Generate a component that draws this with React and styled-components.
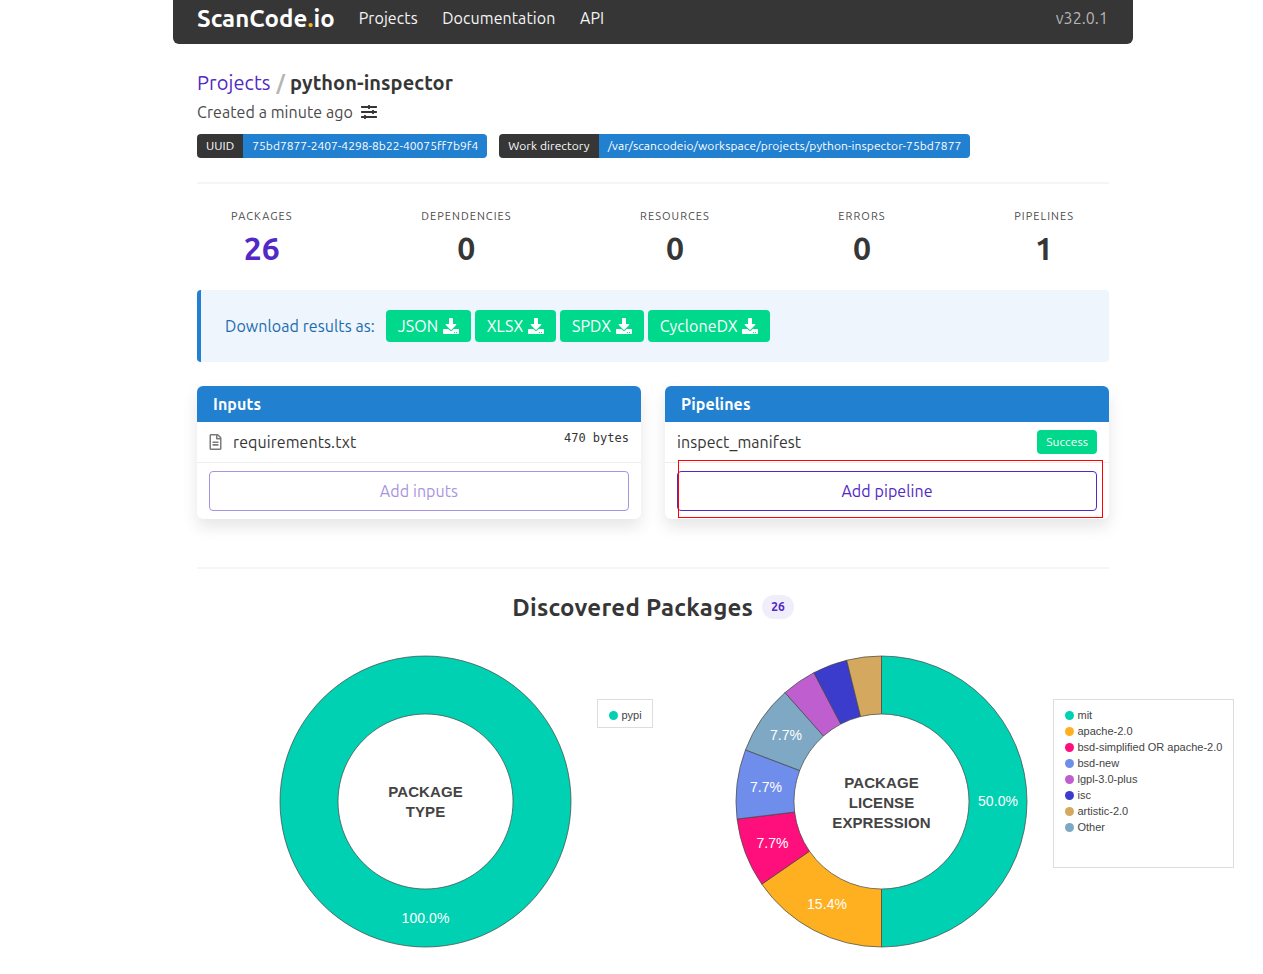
import React from "react"
import styled, { createGlobalStyle } from "styled-components"
import { FaDownload, FaRegFileAlt, FaSlidersH } from "react-icons/fa"

const GlobalStyle = createGlobalStyle`
  * { box-sizing: border-box; }
  body {
    margin: 0;
    background: #fff;
    color: #4a4a4a;
    font-family: "Ubuntu", "Noto Sans", "Liberation Sans", sans-serif;
    font-size: 16px;
    letter-spacing: 0.08px;
  }
`

const Page = styled.div`
  width: 960px;
  margin-left: 173px;
`

const Navbar = styled.nav`
  display: flex;
  align-items: center;
  height: 44px;
  padding: 0 25px 8px 24px;
  background: #363636;
  border-radius: 0 0 6px 6px;
  color: #f5f5f5;
`

const Brand = styled.div`
  font-size: 24px;
  font-weight: 700;
  color: #fff;
  margin-right: 24px;
  span { color: #ffb020; }
`

const NavLink = styled.a`
  margin-right: 24.5px;
  font-size: 16px;
`

const Version = styled.div`
  margin-left: auto;
  color: #b5b5b5;
  font-size: 16px;
`

const Content = styled.main`
  padding: 0 24px;
`

const Title = styled.h1`
  margin: 25px 0 0;
  height: 27px;
  line-height: 27px;
  font-size: 20px;
  font-weight: 400;
  a { color: #5229c4; }
  i { color: #b5b5b5; font-style: normal; font-weight: 700; margin: 0 5px 0 6px; }
  b { color: #363636; font-weight: 700; }
`

const Created = styled.div`
  display: flex;
  align-items: center;
  gap: 8px;
  margin-top: 4px;
  height: 24px;
  svg { color: #363636; width: 16px; height: 16px; }
`

const Tags = styled.div`
  display: flex;
  gap: 12px;
  margin-top: 10px;
`

const Tag = styled.div`
  display: flex;
  height: 24px;
  line-height: 24px;
  font-size: 12px;
  border-radius: 4px;
  overflow: hidden;
  span { padding: 0 9px; background: #363636; color: #fff; }
  em {
    padding: 0 9px;
    background: #2180cf;
    color: #fff;
    font-style: normal;
    letter-spacing: ${p => (p.$tight ? "0.03px" : "0.08px")};
  }
`

const Rule = styled.hr`
  border: 0;
  height: 2px;
  background: #f5f5f5;
  margin: ${p => p.$top}px 0 ${p => p.$bottom}px;
`

const Stats = styled.div`
  display: flex;
  justify-content: space-between;
  padding: 0 35px 0 34px;
`

const Stat = styled.div`
  text-align: center;
`

const StatLabel = styled.div`
  font-size: 11px;
  letter-spacing: 1.05px;
  line-height: 16px;
  text-transform: uppercase;
`

const StatValue = styled.div`
  margin-top: 4px;
  font-size: 32px;
  line-height: 40px;
  font-weight: 700;
  color: ${p => (p.$link ? "#5229c4" : "#363636")};
`

const Notice = styled.div`
  display: flex;
  align-items: center;
  height: 72px;
  margin-top: 22px;
  padding-left: 24px;
  background: #eef5fc;
  border-left: 4px solid #2180cf;
  border-radius: 4px;
  color: #1b6cb0;
`

const NoticeText = styled.span`
  margin-right: 11px;
`

const Downloads = styled.div`
  display: flex;
  gap: 4px;
`

const DownloadButton = styled.a`
  display: flex;
  align-items: center;
  gap: 4.5px;
  height: 32px;
  padding: 0 12px;
  background: #00d98b;
  border-radius: 4px;
  color: #fff;
  svg { width: 16px; height: 16px; }
`

const Columns = styled.div`
  display: grid;
  grid-template-columns: 444px 444px;
  gap: 24px;
  margin-top: 24px;
`

const Card = styled.section`
  position: relative;
  border-radius: 6px;
  background: #fff;
  box-shadow: 0 8px 16px rgba(10, 10, 10, 0.1), 0 0 1px rgba(10, 10, 10, 0.02);
`

const CardHeader = styled.header`
  height: 36px;
  line-height: 36px;
  padding-left: 16px;
  background: #2180cf;
  border-radius: 6px 6px 0 0;
  color: #fff;
  font-weight: 700;
`

const CardRow = styled.div`
  display: flex;
  align-items: ${p => (p.$top ? "flex-start" : "center")};
  justify-content: space-between;
  height: 41px;
  padding: ${p => (p.$top ? "8px" : "0")} 12px 0;
  border-bottom: 1px solid #ededed;
  color: #363636;
`

const FileName = styled.div`
  display: flex;
  align-items: center;
  gap: 11px;
  height: 24px;
  svg { width: 13px; height: 16px; color: #7a7a7a; }
`

const Size = styled.code`
  font-family: "DejaVu Sans Mono", monospace;
  font-size: 12px;
  line-height: 16px;
  letter-spacing: 0;
`

const Badge = styled.span`
  height: 24px;
  line-height: 24px;
  padding: 0 9px;
  background: #00d98b;
  border-radius: 4px;
  color: #fff;
  font-size: 12px;
`

const CardFooter = styled.div`
  padding: 8px 12px;
`

const OutlineButton = styled.a`
  display: block;
  height: 40px;
  line-height: 38px;
  text-align: center;
  border: 1px solid #5229c4;
  border-radius: 4px;
  color: #5229c4;
  background: #fff;
  opacity: ${p => (p.$disabled ? 0.5 : 1)};
`

const Highlight = styled.div`
  position: absolute;
  left: 13px;
  top: 74px;
  width: 425px;
  height: 58px;
  border: 1px solid #f00;
`

const SectionTitle = styled.div`
  display: flex;
  align-items: center;
  justify-content: center;
  gap: 9px;
  height: 30px;
  font-size: 24px;
  font-weight: 700;
  letter-spacing: 0.25px;
  color: #363636;
`

const CountPill = styled.span`
  height: 24px;
  line-height: 24px;
  padding: 0 9px;
  border-radius: 12px;
  background: #f0eefa;
  color: #5229c4;
  font-size: 12px;
  letter-spacing: 0;
`

const Charts = styled.div`
  display: flex;
  gap: 81px;
  margin-top: 32px;
  padding-left: 81px;
`

const Chart = styled.div`
  display: flex;
  flex: none;
  align-items: flex-start;
  gap: 24px;
`

const Legend = styled.ul`
  flex: none;
  margin: 45px 0 0;
  padding: 7px 10px 7px 10.5px;
  list-style: none;
  width: ${p => p.$width}px;
  height: ${p => p.$height}px;
  border: 1px solid #ddd;
`

const LegendItem = styled.li`
  display: flex;
  align-items: center;
  gap: 4px;
  height: 16px;
  font-family: "Liberation Sans", Arial, sans-serif;
  font-size: 11px;
  letter-spacing: 0;
  color: #444;
  white-space: nowrap;
`

const Dot = styled.i`
  width: 9px;
  height: 9px;
  border-radius: 50%;
  background: ${p => p.$color};
`

const polar = (r, a) => [147.5 + r * Math.sin(a), 147.5 - r * Math.cos(a)]

function slicePath(from, to, r0, r1) {
  const large = to - from > Math.PI ? 1 : 0
  const [x1, y1] = polar(r1, from)
  const [x2, y2] = polar(r1, to)
  const [x3, y3] = polar(r0, to)
  const [x4, y4] = polar(r0, from)
  return `M${x1} ${y1}A${r1} ${r1} 0 ${large} 1 ${x2} ${y2}L${x3} ${y3}A${r0} ${r0} 0 ${large} 0 ${x4} ${y4}Z`
}

function Donut({ slices, lines, labelTop }) {
  const total = slices.reduce((sum, s) => sum + s.value, 0)
  let angle = 0
  return (
    <svg width="295" height="295" viewBox="0 0 295 295" style={{ flex: "none" }}>
      {slices.length === 1 ? (
        <path
          fillRule="evenodd"
          fill={slices[0].color}
          stroke="#444"
          strokeWidth="0.7"
          d="M147.5 2a145.5 145.5 0 1 0 .01 0ZM147.5 60a87.5 87.5 0 1 0 .01 0Z"
        />
      ) : (
        slices.map(s => {
          const from = angle
          angle += (s.value / total) * Math.PI * 2
          return <path key={s.name} d={slicePath(from, angle, 87.5, 145.5)} fill={s.color} stroke="#444" strokeWidth="0.7" />
        })
      )}
      {slices.filter(s => s.label).map(s => (
        <text key={s.name} x={s.label[1]} y={s.label[2]} fill="#fff" fontSize="14" textAnchor="middle" fontFamily="Liberation Sans, Arial, sans-serif">
          {s.label[0]}
        </text>
      ))}
      {lines.map((line, i) => (
        <text key={line} x="147.5" y={labelTop + i * 20} fill="#444" fontSize="15" fontWeight="700" textAnchor="middle" fontFamily="Liberation Sans, Arial, sans-serif">
          {line}
        </text>
      ))}
    </svg>
  )
}

const typeSlices = [
  { name: "pypi", value: 26, color: "#00d1b2", label: ["100.0%", 147.5, 269] },
]

const licenseSlices = [
  { name: "mit", value: 13, color: "#00d1b2", label: ["50.0%", 264, 152] },
  { name: "apache-2.0", value: 4, color: "#ffb020", label: ["15.4%", 93, 255] },
  { name: "bsd-simplified OR apache-2.0", value: 2, color: "#ff0f7b", label: ["7.7%", 38.5, 194] },
  { name: "bsd-new", value: 2, color: "#6f8eeb", label: ["7.7%", 32, 138] },
  { name: "Other", value: 2, color: "#7fa8c4", label: ["7.7%", 52, 86] },
  { name: "lgpl-3.0-plus", value: 1, color: "#bf5fcf" },
  { name: "isc", value: 1, color: "#3c3ccc" },
  { name: "artistic-2.0", value: 1, color: "#d4a85f" },
]

const legendOrder = ["mit", "apache-2.0", "bsd-simplified OR apache-2.0", "bsd-new", "lgpl-3.0-plus", "isc", "artistic-2.0", "Other"]

const stats = [
  ["Packages", "26", true],
  ["Dependencies", "0"],
  ["Resources", "0"],
  ["Errors", "0"],
  ["Pipelines", "1"],
]

export default function App() {
  return (
    <Page>
      <GlobalStyle />
      <Navbar>
        <Brand>ScanCode<span>.</span>io</Brand>
        <NavLink>Projects</NavLink>
        <NavLink>Documentation</NavLink>
        <NavLink>API</NavLink>
        <Version>v32.0.1</Version>
      </Navbar>
      <Content>
        <Title><a>Projects</a><i>/</i><b>python-inspector</b></Title>
        <Created>Created a minute ago <FaSlidersH /></Created>
        <Tags>
          <Tag $tight><span>UUID</span><em>75bd7877-2407-4298-8b22-40075ff7b9f4</em></Tag>
          <Tag><span>Work directory</span><em>/var/scancodeio/workspace/projects/python-inspector-75bd7877</em></Tag>
        </Tags>
        <Rule $top={24} $bottom={24} />
        <Stats>
          {stats.map(([label, value, link]) => (
            <Stat key={label}>
              <StatLabel>{label}</StatLabel>
              <StatValue $link={link}>{value}</StatValue>
            </Stat>
          ))}
        </Stats>
        <Notice>
          <NoticeText>Download results as:</NoticeText>
          <Downloads>
            {["JSON", "XLSX", "SPDX", "CycloneDX"].map(name => (
              <DownloadButton key={name}>{name} <FaDownload /></DownloadButton>
            ))}
          </Downloads>
        </Notice>
        <Columns>
          <Card>
            <CardHeader>Inputs</CardHeader>
            <CardRow $top>
              <FileName><FaRegFileAlt />requirements.txt</FileName>
              <Size>470 bytes</Size>
            </CardRow>
            <CardFooter><OutlineButton $disabled>Add inputs</OutlineButton></CardFooter>
          </Card>
          <Card>
            <CardHeader>Pipelines</CardHeader>
            <CardRow>
              <span>inspect_manifest</span>
              <Badge>Success</Badge>
            </CardRow>
            <CardFooter><OutlineButton>Add pipeline</OutlineButton></CardFooter>
            <Highlight />
          </Card>
        </Columns>
        <Rule $top={48} $bottom={23} />
        <SectionTitle>Discovered Packages <CountPill>26</CountPill></SectionTitle>
        <Charts>
          <Chart>
            <Donut slices={typeSlices} lines={["PACKAGE", "TYPE"]} labelTop={143} />
            <Legend $width={56} $height={29}>
              <LegendItem><Dot $color="#00d1b2" />pypi</LegendItem>
            </Legend>
          </Chart>
          <Chart>
            <Donut slices={licenseSlices} lines={["PACKAGE", "LICENSE", "EXPRESSION"]} labelTop={134} />
            <Legend $width={181} $height={169}>
              {legendOrder.map(name => {
                const slice = licenseSlices.find(s => s.name === name)
                return <LegendItem key={name}><Dot $color={slice.color} />{name}</LegendItem>
              })}
            </Legend>
          </Chart>
        </Charts>
      </Content>
    </Page>
  )
}
